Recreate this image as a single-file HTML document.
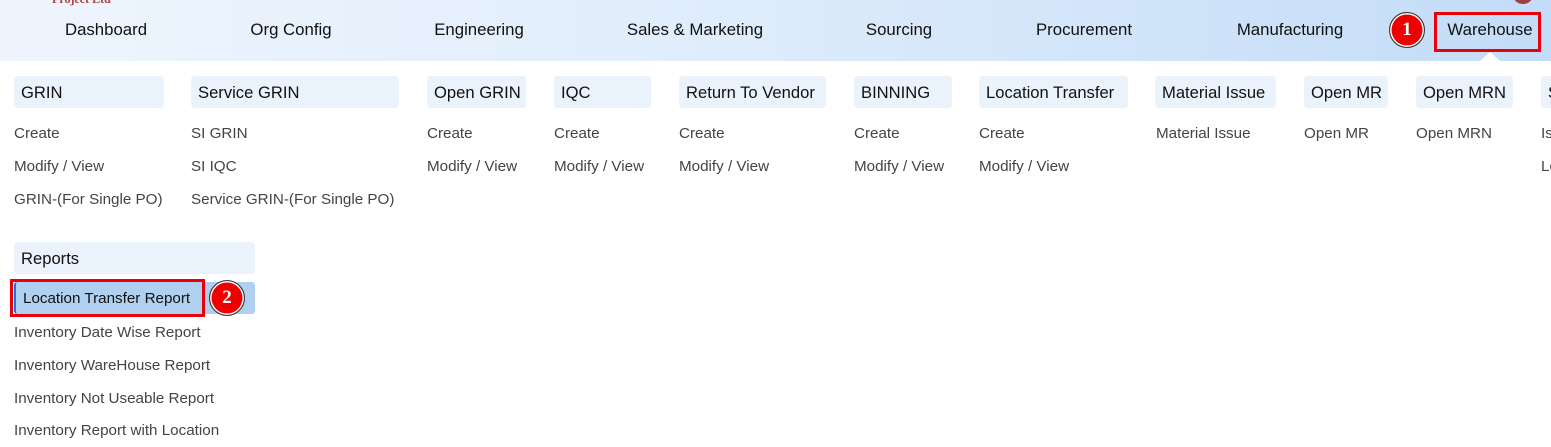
<!DOCTYPE html>
<html><head><meta charset="utf-8"><style>
*{margin:0;padding:0;box-sizing:border-box}
body{width:1551px;height:447px;overflow:hidden;background:#fff;font-family:"Liberation Sans",sans-serif;position:relative}
.hdr{position:absolute;left:0;top:0;width:1551px;height:61px;background:linear-gradient(90deg,#eef5fd 0%,#e2eefc 40%,#c3dcf7 100%)}
.nav{position:absolute;top:20px;font-size:16.8px;color:#111;transform:translateX(-50%);white-space:nowrap}
.box{position:absolute;top:76px;height:32px;background:#eaf2fc;border-radius:4px;font-size:16.6px;color:#111;padding-left:7px;line-height:34px;white-space:nowrap;overflow:hidden}
.lk{position:absolute;font-size:15.2px;color:#444;white-space:nowrap}
.badge{position:absolute;width:36px;height:36px;border-radius:50%;background:#e00;border:1.5px solid #333;box-shadow:0 0 0 1.5px #fff inset;color:#fff;font-weight:bold;font-size:19px;text-align:center;line-height:33px;font-family:"Liberation Serif",serif}
.red{position:absolute;border:3px solid #e8000b}
</style></head><body>
<div class="hdr"></div>
<div style="position:absolute;left:52px;top:-8px;width:60px;height:10px;color:#b04040;font-size:12px;font-weight:bold;font-family:'Liberation Serif',serif">Project Ltd</div>
<div style="position:absolute;left:1513px;top:-14px;width:20px;height:18px;border-radius:50%;background:#a04040"></div>
<div class="nav" style="left:106px">Dashboard</div>
<div class="nav" style="left:291px">Org Config</div>
<div class="nav" style="left:479px">Engineering</div>
<div class="nav" style="left:695px">Sales &amp; Marketing</div>
<div class="nav" style="left:899px">Sourcing</div>
<div class="nav" style="left:1084px">Procurement</div>
<div class="nav" style="left:1290px">Manufacturing</div>
<div class="nav" style="left:1490px">Warehouse</div>
<div class="red" style="left:1434px;top:12px;width:107px;height:40px"></div>
<div class="badge" style="left:1389px;top:12px">1</div>
<div style="position:absolute;left:1480px;top:52px;width:0;height:0;border-left:10px solid transparent;border-right:10px solid transparent;border-bottom:9px solid #fff"></div>

<div class="box" style="left:14px;width:150px">GRIN</div>
<div class="box" style="left:191px;width:208px">Service GRIN</div>
<div class="box" style="left:427px;width:99px">Open GRIN</div>
<div class="box" style="left:554px;width:97px">IQC</div>
<div class="box" style="left:679px;width:147px">Return To Vendor</div>
<div class="box" style="left:854px;width:98px">BINNING</div>
<div class="box" style="left:979px;width:149px">Location Transfer</div>
<div class="box" style="left:1155px;width:121px">Material Issue</div>
<div class="box" style="left:1304px;width:84px">Open MR</div>
<div class="box" style="left:1416px;width:97px">Open MRN</div>
<div class="box" style="left:1541px;width:40px">Stock</div>

<div class="lk" style="left:14px;top:125px">Create</div>
<div class="lk" style="left:14px;top:158px">Modify / View</div>
<div class="lk" style="left:14px;top:191px">GRIN-(For Single PO)</div>
<div class="lk" style="left:191px;top:125px">SI GRIN</div>
<div class="lk" style="left:191px;top:158px">SI IQC</div>
<div class="lk" style="left:191px;top:191px">Service GRIN-(For Single PO)</div>
<div class="lk" style="left:427px;top:125px">Create</div>
<div class="lk" style="left:427px;top:158px">Modify / View</div>
<div class="lk" style="left:554px;top:125px">Create</div>
<div class="lk" style="left:554px;top:158px">Modify / View</div>
<div class="lk" style="left:679px;top:125px">Create</div>
<div class="lk" style="left:679px;top:158px">Modify / View</div>
<div class="lk" style="left:854px;top:125px">Create</div>
<div class="lk" style="left:854px;top:158px">Modify / View</div>
<div class="lk" style="left:979px;top:125px">Create</div>
<div class="lk" style="left:979px;top:158px">Modify / View</div>
<div class="lk" style="left:1156px;top:125px">Material Issue</div>
<div class="lk" style="left:1304px;top:125px">Open MR</div>
<div class="lk" style="left:1416px;top:125px">Open MRN</div>
<div class="lk" style="left:1541px;top:125px">Issue</div>
<div class="lk" style="left:1541px;top:158px">Loc</div>

<div class="box" style="left:14px;top:242px;width:241px">Reports</div>
<div style="position:absolute;left:14px;top:282px;width:241px;height:32px;background:#b0d0f0;border-radius:3px;border-left:2px solid #1a73e8"></div>
<div style="position:absolute;left:23px;top:290px;font-size:15.2px;color:#111">Location Transfer Report</div>
<div class="red" style="left:10px;top:279px;width:195px;height:38px"></div>
<div class="badge" style="left:209px;top:280px">2</div>
<div class="lk" style="left:14px;top:324px">Inventory Date Wise Report</div>
<div class="lk" style="left:14px;top:357px">Inventory WareHouse Report</div>
<div class="lk" style="left:14px;top:390px">Inventory Not Useable Report</div>
<div class="lk" style="left:14px;top:422px">Inventory Report with Location</div>
</body></html>
